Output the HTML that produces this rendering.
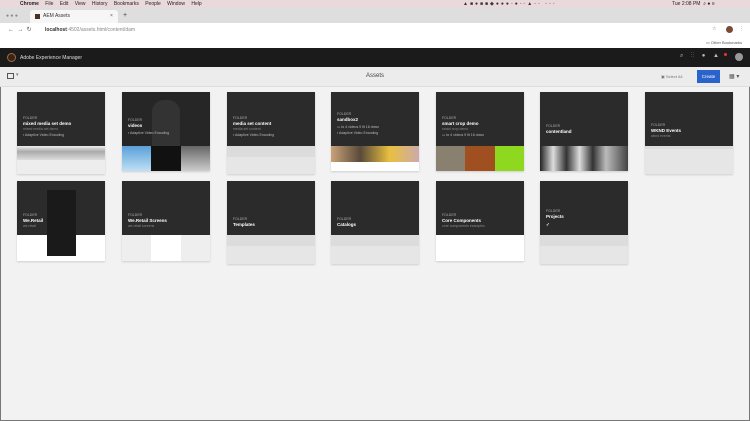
<!DOCTYPE html><html><head><meta charset="utf-8"><style>
*{margin:0;padding:0;box-sizing:border-box}
body{width:750px;height:421px;overflow:hidden;background:#f2f2f2;font-family:"Liberation Sans",sans-serif;position:relative}
.a{position:absolute}
.card{position:absolute;width:88px;box-shadow:0 1px 2px rgba(0,0,0,.15)}
.dk{position:absolute;left:0;top:0;width:88px;height:54px;background:#2b2b2b;overflow:hidden}
.t{position:absolute;left:6px;color:#ddd;white-space:nowrap}
.f{font-size:3.5px;color:#aaa}
.n{font-size:4.5px;font-weight:bold;color:#fff}
.s{font-size:3.5px;color:#888}
.g1{position:absolute;left:0;width:88px;background:#dcdcdc}
</style></head><body>
<div class="a" style="left:0;top:0;width:750px;height:8px;background:#e9d9dc"></div>
<div class="a" style="left:20px;top:0;font-size:5px;color:#222;line-height:8px;word-spacing:5px"><b>Chrome</b> File Edit View History Bookmarks People Window Help</div>
<div class="a" style="left:463px;top:0;font-size:5px;color:#333;line-height:8px;letter-spacing:2px">▲■●■■◆●●●◦●◦◦▲◦◦ ◦◦◦</div>
<div class="a" style="left:672px;top:0;font-size:5px;color:#222;line-height:8px">Tue 2:08 PM &nbsp;⌕ ● ≡</div>
<div class="a" style="left:0;top:8px;width:750px;height:15px;background:#dedede"></div>
<div class="a" style="left:30px;top:10px;width:88px;height:13px;background:#f6f6f6;border-radius:3px 3px 0 0"></div>
<div class="a" style="left:35px;top:14px;width:5px;height:5px;background:#4a3222"></div>
<div class="a" style="left:43px;top:13px;font-size:5px;color:#333">AEM Assets</div>
<div class="a" style="left:110px;top:13px;font-size:5px;color:#555">×</div>
<div class="a" style="left:123px;top:12px;font-size:7px;color:#444">+</div>
<div class="a" style="left:6px;top:13px;font-size:5px;color:#888">● ● ●</div>
<div class="a" style="left:0;top:23px;width:750px;height:25px;background:#fff"></div>
<div class="a" style="left:8px;top:26px;font-size:6px;color:#555">←&nbsp; → &nbsp;↻</div>
<div class="a" style="left:45px;top:27px;font-size:5px;color:#333"><b>localhost</b><span style="color:#888">:4502/assets.html/content/dam</span></div>
<div class="a" style="left:712px;top:26px;font-size:5px;color:#666">☆</div>
<div class="a" style="left:726px;top:26px;width:7px;height:7px;border-radius:50%;background:#7a4a35"></div>
<div class="a" style="left:739px;top:26px;font-size:5px;color:#666">⋮</div>
<div class="a" style="left:706px;top:40px;font-size:4px;color:#555">▭ Other Bookmarks</div>
<div class="a" style="left:0;top:48px;width:750px;height:19px;background:#1b1b1b"></div>
<div class="a" style="left:7px;top:53px;width:9px;height:9px;border-radius:50%;border:1px solid #a06a45;background:#3a2418"></div>
<div class="a" style="left:20px;top:55px;font-size:5px;color:#ddd">Adobe Experience Manager</div>
<div class="a" style="left:680px;top:53px;font-size:6px;color:#bbb;word-spacing:6px">⌕ ⋮⋮ ● ▲</div>
<div class="a" style="left:724px;top:53px;width:3px;height:3px;border-radius:50%;background:#e33"></div>
<div class="a" style="left:735px;top:53px;width:8px;height:8px;border-radius:50%;background:#999"></div>
<div class="a" style="left:0;top:67px;width:750px;height:20px;background:#ececec;border-bottom:1px solid #ddd"></div>
<div class="a" style="left:7px;top:73px;width:7px;height:6px;border:1px solid #555"></div>
<div class="a" style="left:16px;top:72px;font-size:5px;color:#777">▾</div>
<div class="a" style="left:366px;top:73px;font-size:6px;color:#444">Assets</div>
<div class="a" style="left:661px;top:74px;font-size:4px;color:#777">▣ Select All</div>
<div class="a" style="left:697px;top:70px;width:23px;height:13px;background:#2b63cc;color:#fff;font-size:4.5px;text-align:center;line-height:13px">Create</div>
<div class="a" style="left:729px;top:73px;font-size:6px;color:#555">▦ ▾</div>
<div class="a" style="left:0;top:87px;width:1px;height:334px;background:#777"></div>
<div class="a" style="left:749px;top:87px;width:1px;height:334px;background:#777"></div>
<div class="a" style="left:0;top:420px;width:750px;height:1px;background:#777"></div>

<!-- row 1 -->
<div class="card" style="left:17px;top:92px;height:82px;background:#ededed">
<div class="g1" style="top:54px;height:14px;background:linear-gradient(#eee,#aaa 40%,#ddd)"></div>
<div class="dk"><div class="t f" style="top:24px">FOLDER</div><div class="t n" style="top:29px">mixed media set demo</div><div class="t s" style="top:35px">mixed media set demo</div><div class="t s" style="top:41px;color:#bbb">▪ Adaptive Video Encoding</div></div></div>
<div class="card" style="left:122px;top:92px;height:79px;background:#fff">
<div class="a" style="left:0;top:54px;width:29px;height:25px;background:linear-gradient(#5aa0d8,#bfe0f5)"></div>
<div class="a" style="left:29px;top:54px;width:30px;height:25px;background:#111"></div>
<div class="a" style="left:59px;top:54px;width:29px;height:25px;background:linear-gradient(#666,#ccc)"></div>
<div class="dk" style="background:#262626"><div class="a" style="left:30px;top:8px;width:28px;height:46px;background:#333;border-radius:12px 12px 0 0"></div><div class="t f" style="top:26px">FOLDER</div><div class="t n" style="top:31px">videos</div><div class="t s" style="top:39px;color:#bbb">▪ Adaptive Video Encoding</div></div></div>
<div class="card" style="left:227px;top:92px;height:82px;background:#e6e6e6">
<div class="g1" style="top:54px;height:11px"></div>
<div class="dk"><div class="t f" style="top:24px">FOLDER</div><div class="t n" style="top:29px">media set content</div><div class="t s" style="top:35px">media set content</div><div class="t s" style="top:41px;color:#bbb">▪ Adaptive Video Encoding</div></div></div>
<div class="card" style="left:331px;top:92px;height:79px;background:#fff">
<div class="a" style="left:0;top:54px;width:88px;height:16px;background:linear-gradient(90deg,#c9a27a,#5a4a3a,#e8c040,#caa)"></div>
<div class="dk"><div class="t f" style="top:20px">FOLDER</div><div class="t n" style="top:25px">sandbox2</div><div class="t s" style="top:33px;color:#bbb">▭ to 4 videos 9 fit 16 down</div><div class="t s" style="top:39px;color:#bbb">▪ Adaptive Video Encoding</div></div></div>
<div class="card" style="left:436px;top:92px;height:79px;background:#fff">
<div class="a" style="left:0;top:54px;width:29px;height:25px;background:#8a8070"></div>
<div class="a" style="left:29px;top:54px;width:30px;height:25px;background:#a05020"></div>
<div class="a" style="left:59px;top:54px;width:29px;height:25px;background:#8fd820"></div>
<div class="dk"><div class="t f" style="top:24px">FOLDER</div><div class="t n" style="top:29px">smart crop demo</div><div class="t s" style="top:35px">smart crop demo</div><div class="t s" style="top:41px;color:#bbb">▭ to 4 videos 9 fit 16 down</div></div></div>
<div class="card" style="left:540px;top:92px;height:79px;background:#fff">
<div class="a" style="left:0;top:54px;width:88px;height:25px;background:linear-gradient(90deg,#222,#ddd 15%,#333 30%,#ddd 45%,#333 60%,#bbb 75%,#444)"></div>
<div class="dk"><div class="t f" style="top:32px">FOLDER</div><div class="t n" style="top:37px">contentland</div></div></div>
<div class="card" style="left:645px;top:92px;height:82px;background:#e6e6e6">
<div class="g1" style="top:54px;height:3px"></div>
<div class="dk"><div class="t f" style="top:31px">FOLDER</div><div class="t n" style="top:36px">WKND Events</div><div class="t s" style="top:42px">wknd events</div></div></div>

<!-- row 2 -->
<div class="card" style="left:17px;top:181px;height:80px;background:#fff">
<div class="dk"><div class="t f" style="top:32px">FOLDER</div><div class="t n" style="top:37px">We.Retail</div><div class="t s" style="top:43px">we.retail</div></div>
<div class="a" style="left:30px;top:9px;width:29px;height:66px;background:#1a1a1a"></div></div>
<div class="card" style="left:122px;top:181px;height:80px;background:#eee">
<div class="a" style="left:29px;top:54px;width:30px;height:26px;background:#fff"></div>
<div class="dk"><div class="t f" style="top:32px">FOLDER</div><div class="t n" style="top:37px">We.Retail Screens</div><div class="t s" style="top:43px">we.retail screens</div></div></div>
<div class="card" style="left:227px;top:181px;height:83px;background:#e6e6e6">
<div class="g1" style="top:54px;height:11px"></div>
<div class="dk"><div class="t f" style="top:36px">FOLDER</div><div class="t n" style="top:41px">Templates</div></div></div>
<div class="card" style="left:331px;top:181px;height:83px;background:#e6e6e6">
<div class="g1" style="top:54px;height:11px"></div>
<div class="dk"><div class="t f" style="top:36px">FOLDER</div><div class="t n" style="top:41px">Catalogs</div></div></div>
<div class="card" style="left:436px;top:181px;height:80px;background:#fff">
<div class="dk"><div class="t f" style="top:32px">FOLDER</div><div class="t n" style="top:37px">Core Components</div><div class="t s" style="top:43px">core components examples</div></div></div>
<div class="card" style="left:540px;top:181px;height:83px;background:#e6e6e6">
<div class="g1" style="top:54px;height:11px"></div>
<div class="dk"><div class="t f" style="top:28px">FOLDER</div><div class="t n" style="top:33px">Projects</div><div class="t n" style="top:41px">✓</div></div></div>
</body></html>
